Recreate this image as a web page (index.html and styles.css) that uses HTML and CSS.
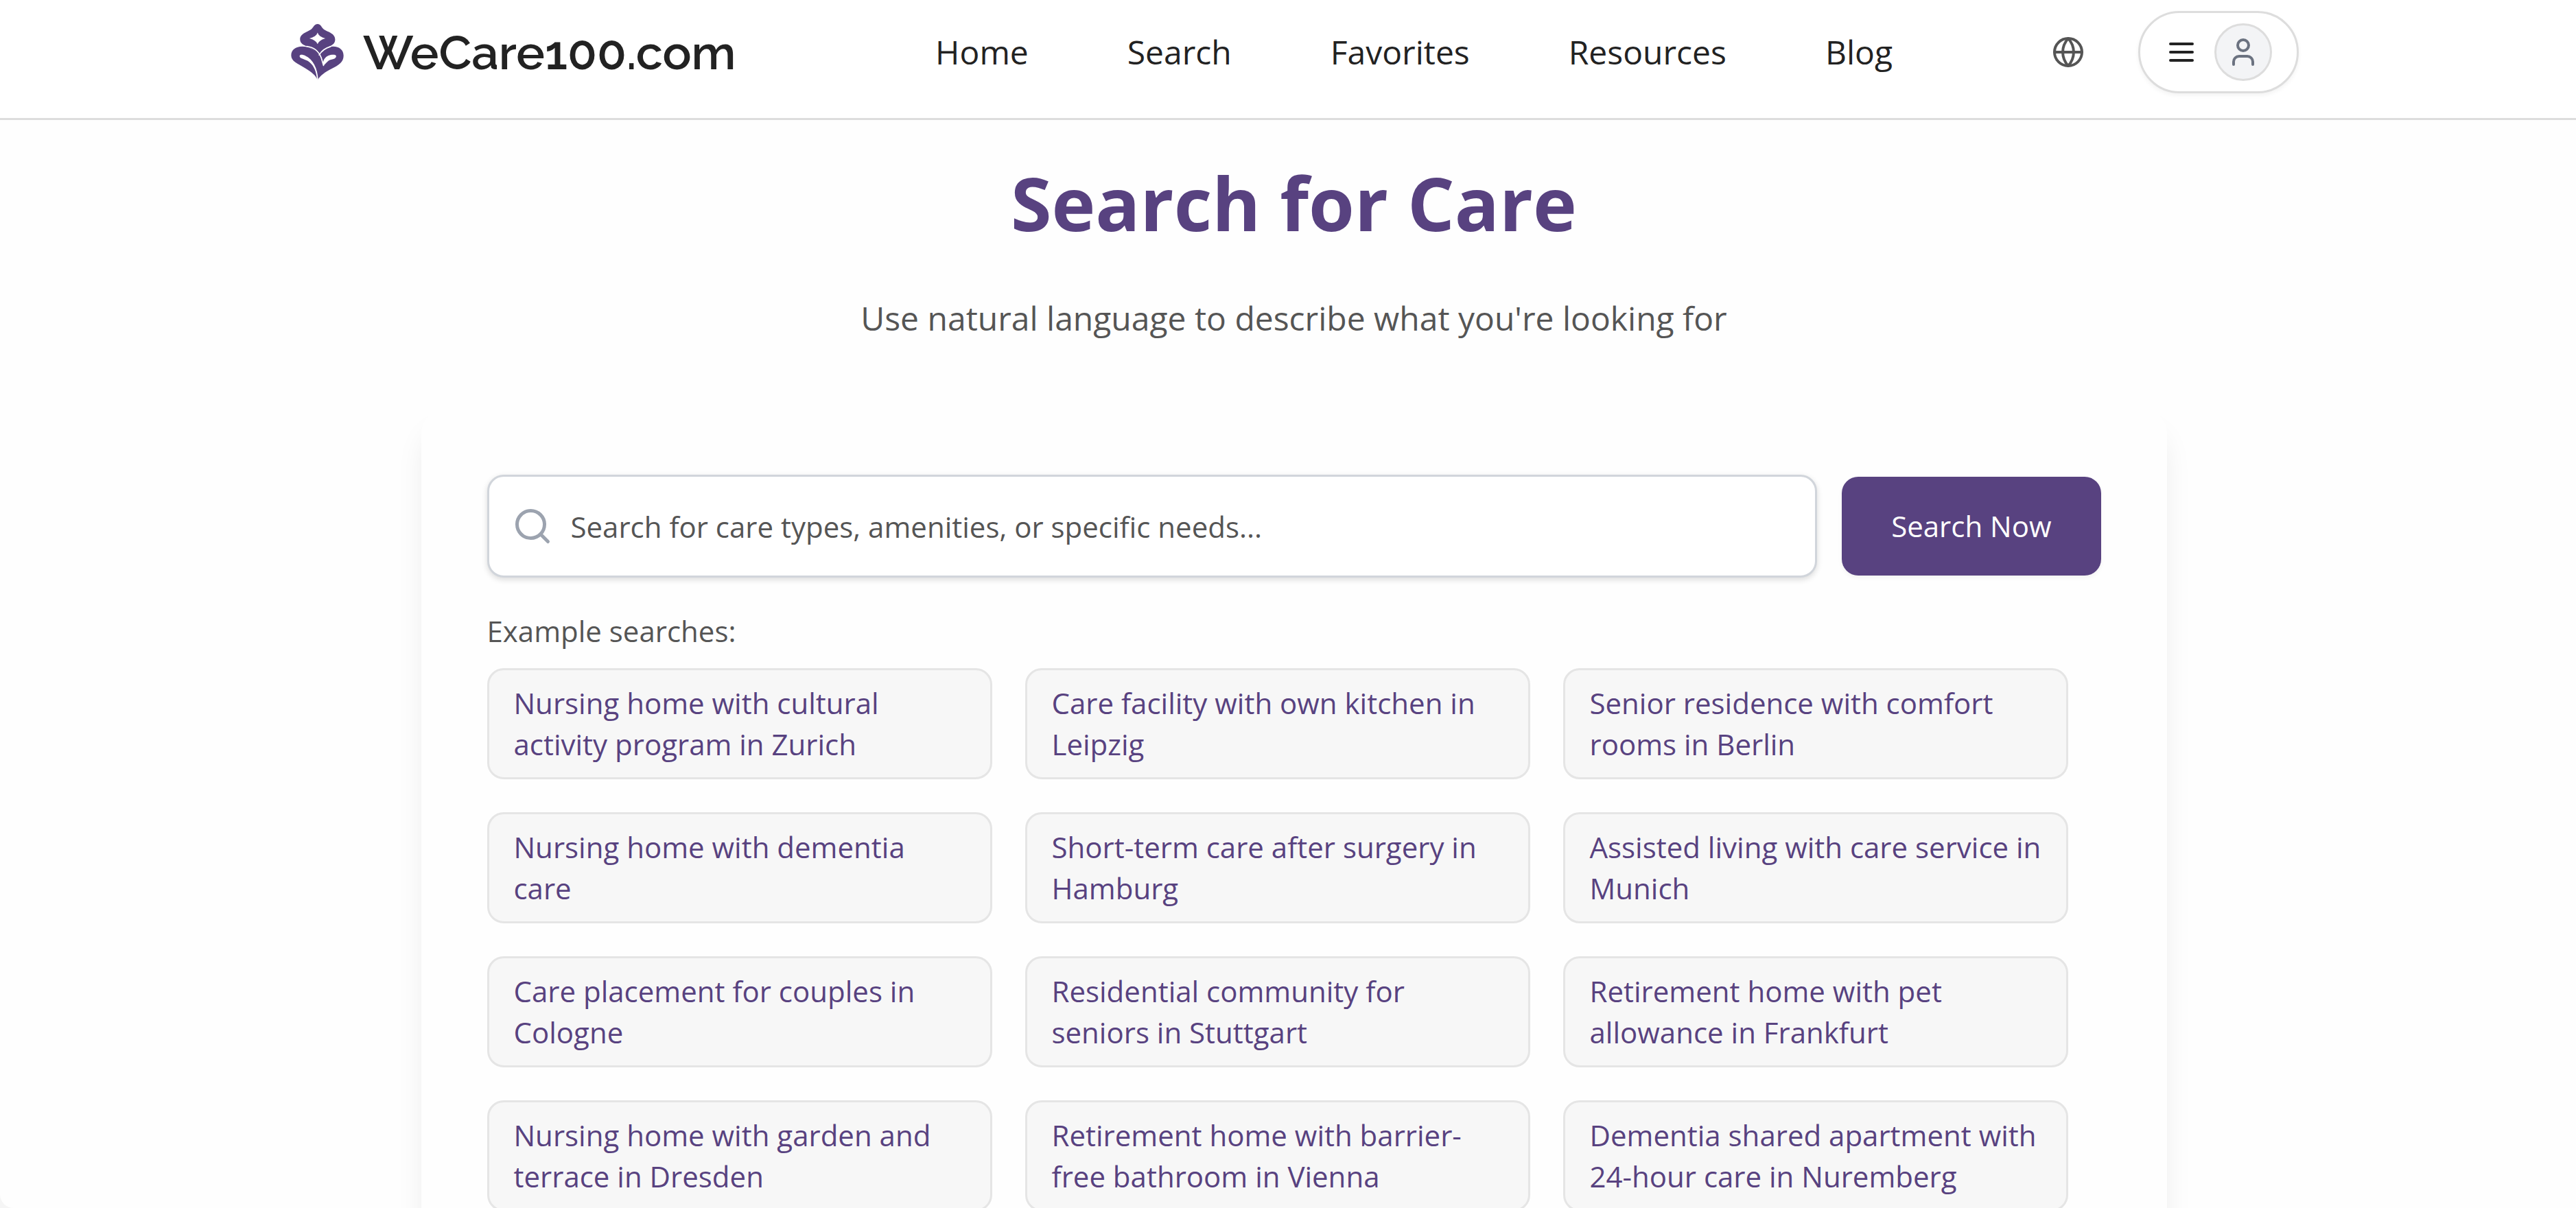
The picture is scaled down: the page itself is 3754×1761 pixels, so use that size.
FILE: index.html
```html
<!DOCTYPE html>
<html lang="en">
<head>
    <meta charset="UTF-8">
    <meta name="viewport" content="width=device-width, initial-scale=1.0">
    <title>WeCare100.com - Search for Care</title>
    <link rel="stylesheet" href="styles.css">
</head>
<body>
    <header class="site-header">
        <div class="header-inner">
            <a class="logo" href="#">
                <svg class="logo-mark" viewBox="30 42 230 247" aria-hidden="true">
                    <!-- lower leaves -->
                    <path fill="#584280" d="M146 289C140 268 118 252 92 236 58 216 30 206 30 180 30 156 50 141 78 141c30 0 56 14 70 34 12-20 36-34 66-34 28 0 46 16 46 40 0 28-22 42-50 56-32 16-54 32-64 52z"/>
                    <!-- top bud -->
                    <path fill="#584280" d="M146 42c14 0 15 12 24 20 16 15 53 18 53 48 0 22-18 27-36 36-18 8-28 18-38 33-12-16-22-26-42-35-18-8-38-14-38-34 0-30 36-32 52-48 9-8 11-20 25-20z"/>
                    <path fill="none" stroke="#fff" stroke-width="5" stroke-linecap="round" d="M98 140c32 4 54 24 64 50l10 34"/>
                    <path fill="none" stroke="#fff" stroke-width="5" stroke-linecap="round" d="M153 178c10-18 26-30 50-37"/>
                    <path fill="#fff" d="M146 80c5 13 14 20 34 25-20 6-28 13-34 25-6-12-15-19-36-25 21-5 31-12 36-25z"/>
                    <path fill="#fff" d="M67 183c1-9 14-7 25-2 34 16 54 54 57 108h-5c-3-38-14-64-34-80-18-14-44-14-43-26z"/>
                    <path fill="#fff" d="M172 225c-8-26 14-50 46-48 13 1 12 12 2 17-9 4-16 3-24 8-9 6-14 15-24 23z"/>
                </svg>
                <span class="logo-text">WeCare100.com</span>
            </a>

            <nav class="main-nav">
                <a href="#">Home</a>
                <a href="#">Search</a>
                <a href="#">Favorites</a>
                <a href="#">Resources</a>
                <a href="#">Blog</a>
            </nav>

            <button type="button" class="language-btn" aria-label="Language">
                <svg class="icon" viewBox="0 0 24 24">
                    <circle cx="12" cy="12" r="10"/>
                    <path d="M2 12h20"/>
                    <path d="M12 2a15.300 15.300 0 0 1 4 10 15.300 15.300 0 0 1-4 10 15.300 15.300 0 0 1-4-10 15.300 15.300 0 0 1 4-10z"/>
                </svg>
            </button>

            <button type="button" class="account-btn" aria-label="Account menu">
                <svg class="icon" viewBox="0 0 24 24">
                    <path d="M4 6h16M4 12h16M4 18h16"/>
                </svg>
                <span class="avatar">
                    <svg class="icon" viewBox="0 0 24 24">
                        <path d="M19 21v-2a4 4 0 0 0-4-4H9a4 4 0 0 0-4 4v2"/>
                        <circle cx="12" cy="7" r="4"/>
                    </svg>
                </span>
            </button>
        </div>
    </header>

    <main class="page">
        <h1>Search for Care</h1>
        <p class="subtitle">Use natural language to describe what you're looking for</p>

        <section class="search-card">
            <form class="search-form">
                <label class="search-field">
                    <svg class="search-icon" viewBox="0 0 24 24" aria-hidden="true">
                        <circle cx="11" cy="11" r="8"/>
                        <path d="m21 21-4.300-4.300"/>
                    </svg>
                    <input type="text" aria-label="Search for care" placeholder="Search for care types, amenities, or specific needs...">
                </label>
                <button type="submit" class="search-btn">Search Now</button>
            </form>

            <p class="examples-label">Example searches:</p>
            <div class="examples">
                <button type="button" class="example">Nursing home with cultural activity program in Zurich</button>
                <button type="button" class="example">Care facility with own kitchen in Leipzig</button>
                <button type="button" class="example">Senior residence with comfort rooms in Berlin</button>
                <button type="button" class="example">Nursing home with dementia care</button>
                <button type="button" class="example">Short-term care after surgery in Hamburg</button>
                <button type="button" class="example">Assisted living with care service in Munich</button>
                <button type="button" class="example">Care placement for couples in Cologne</button>
                <button type="button" class="example">Residential community for seniors in Stuttgart</button>
                <button type="button" class="example">Retirement home with pet allowance in Frankfurt</button>
                <button type="button" class="example">Nursing home with garden and terrace in Dresden</button>
                <button type="button" class="example">Retirement home with barrier-free bathroom in Vienna</button>
                <button type="button" class="example">Dementia shared apartment with 24-hour care in Nuremberg</button>
            </div>
        </section>
    </main>
</body>
</html>
```
FILE: styles.css
```css
* {
    margin: 0;
    padding: 0;
    box-sizing: border-box;
}

html {
    background-color: #f5f5f5;
}

body {
    display: flex;
    flex-direction: column;
    height: 100vh;
    overflow: hidden;
    background-color: #fefefe;
    border-bottom-left-radius: 20px;
    font-family: 'Open Sans', sans-serif;
    font-size: 42px;
    line-height: 60px;
    color: #222;
}

button,
input {
    font: inherit;
    color: inherit;
    border: none;
    background: none;
}

button {
    cursor: pointer;
}

a {
    color: inherit;
    text-decoration: none;
}

.icon {
    display: block;
    width: 48px;
    height: 48px;
    fill: none;
    stroke: currentColor;
    stroke-width: 2;
    stroke-linecap: round;
    stroke-linejoin: round;
}

/* Header */
.site-header {
    padding: 16px 0 36px 14px;
    background-color: #fff;
    border-bottom: 3px solid #ddd;
}

.header-inner {
    display: flex;
    align-items: center;
    width: 100%;
    max-width: 2932px;
    margin: 0 auto;
}

.logo {
    display: flex;
    align-items: center;
    gap: 28px;
    padding-left: 6px;
}

.logo-mark {
    width: 77px;
    height: 82px;
}

.logo-text {
    font-family: 'Raleway', 'Lato', sans-serif;
    font-size: 70px;
    font-weight: 600;
}

.main-nav {
    display: flex;
    gap: 144px;
    margin-left: auto;
    margin-right: 208px;
    font-size: 48px;
}

.language-btn {
    padding: 24px;
    margin-right: 54px;
    color: #555;
}

.account-btn {
    display: flex;
    align-items: center;
    gap: 24px;
    height: 120px;
    padding: 0 36px;
    border: 3px solid #ddd;
    border-radius: 60px;
    background-color: #fff;
    box-shadow: 0 3px 6px rgba(0, 0, 0, 0.05);
}

.avatar {
    display: flex;
    align-items: center;
    justify-content: center;
    width: 84px;
    height: 84px;
    border: 3px solid #ddd;
    border-radius: 50%;
    background-color: #f3f4f6;
    color: #6b7280;
}

/* Search page */
.page {
    flex: 1;
    min-height: 0;
    padding: 61px 0 96px 17px;
    overflow-y: auto;
    scrollbar-width: none;
    text-align: center;
}

h1 {
    font-size: 108px;
    line-height: 120px;
    font-weight: 700;
    color: #584280;
}

.subtitle {
    margin: 72px 0 96px;
    font-size: 48px;
    line-height: 72px;
    color: #555;
}

.search-card {
    width: 100%;
    max-width: 2544px;
    margin: 0 auto;
    padding: 96px;
    border-radius: 36px;
    background-color: #fefefe;
    box-shadow: 0 30px 45px -9px rgba(0, 0, 0, 0.1);
    text-align: left;
}

.search-form {
    display: flex;
    align-items: center;
    gap: 36px;
}

.search-field {
    display: flex;
    flex: 1;
    align-items: center;
    gap: 26px;
    height: 150px;
    padding: 0 33px;
    border: 3px solid #d1d5db;
    border-radius: 24px;
    background-color: #fff;
    box-shadow: 0 3px 8px rgba(0, 0, 0, 0.14);
}

.search-icon {
    width: 60px;
    height: 60px;
    fill: none;
    stroke: #9ca3af;
    stroke-width: 2;
    stroke-linecap: round;
}

.search-field input {
    flex: 1;
    height: 100%;
    outline: none;
}

.search-field input::placeholder {
    color: #555;
    opacity: 1;
}

.search-btn {
    height: 144px;
    padding: 0 72px;
    border-radius: 24px;
    background-color: #584280;
    box-shadow: 0 3px 6px rgba(0, 0, 0, 0.05);
    color: #fff;
}

.search-btn:hover {
    background-color: #493569;
}

.examples-label {
    margin: 48px 0 24px;
    color: #555;
}

.examples {
    display: grid;
    grid-template-columns: repeat(3, 1fr);
    gap: 48px;
    padding-right: 48px;
}

.example {
    padding: 18px 36px;
    border: 3px solid #e5e5e5;
    border-radius: 24px;
    background-color: #f7f7f7;
    color: #584280;
    text-align: left;
}

.example:hover {
    background-color: #eee;
}
```
